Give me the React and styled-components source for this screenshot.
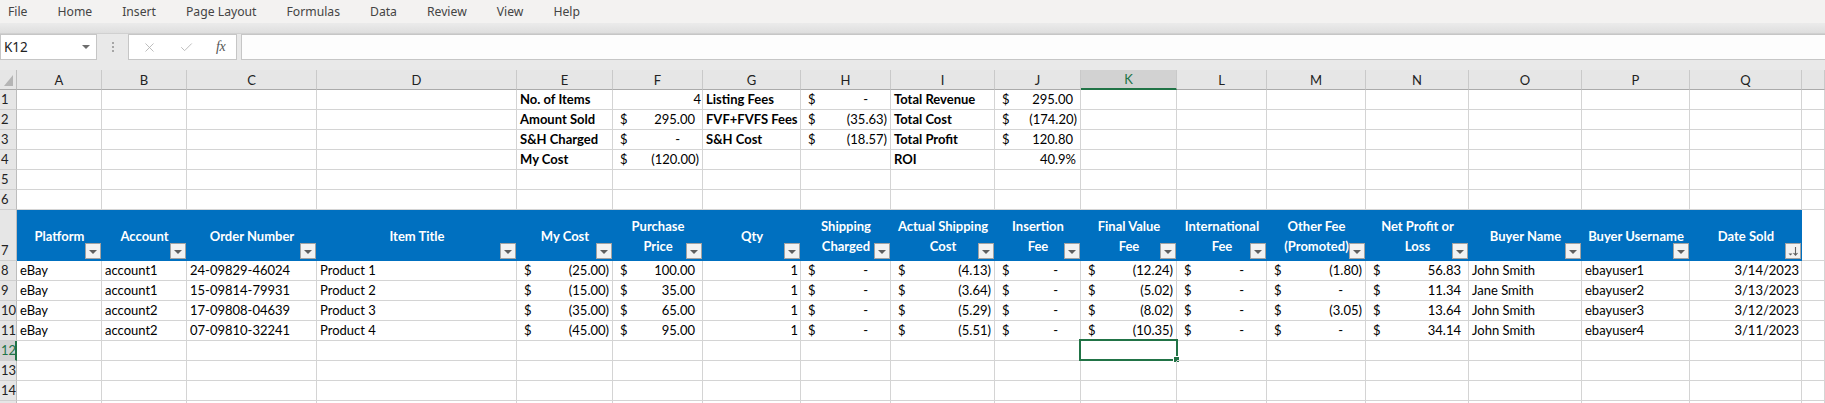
import React from 'react';
import styled, { createGlobalStyle } from 'styled-components';
import { X, Check } from 'lucide-react';

const GlobalStyle = createGlobalStyle`
  html, body {
    margin: 0;
    padding: 0;
    background: #fff;
    overflow: hidden;
  }
  body {
    font-family: Lato, 'Liberation Sans', sans-serif;
  }
`;

const GREEN = '#217346';
const GRID = '#d4d4d4';
const COLS = [17, 85, 85, 130, 200, 96, 90, 98, 90, 104, 86, 96, 90, 99, 103, 113, 108, 112];
const LETTERS = ['A', 'B', 'C', 'D', 'E', 'F', 'G', 'H', 'I', 'J', 'K', 'L', 'M', 'N', 'O', 'P', 'Q', ''];
const MENU = ['File', 'Home', 'Insert', 'Page Layout', 'Formulas', 'Data', 'Review', 'View', 'Help'];

const Window = styled.div`
  width: 1825px;
  height: 403px;
  overflow: hidden;
  background: #fff;
`;

const MenuBar = styled.nav`
  height: 23px;
  display: flex;
  align-items: center;
  gap: 30px;
  padding-left: 8px;
  background: #f3f2f1;
  font-family: 'Noto Sans', sans-serif;
  font-size: 12.2px;
  color: #444;
`;

const RibbonEdge = styled.div`
  height: 10px;
  background: linear-gradient(#ebebeb, #dedede);
  border-bottom: 1px solid #d0d0d0;
`;

const FormulaBar = styled.div`
  height: 36px;
  box-sizing: border-box;
  display: flex;
  align-items: flex-start;
  background: #e9e9e9;
`;

const NameBox = styled.div`
  width: 97px;
  height: 26px;
  box-sizing: border-box;
  display: flex;
  align-items: center;
  justify-content: space-between;
  padding: 0 6px 0 3px;
  background: #fff;
  border: 1px solid #c6c6c6;
  font-family: 'Noto Sans', sans-serif;
  font-size: 13.5px;
  color: #222;
`;

const Caret = styled.span`
  width: 0;
  height: 0;
  border-left: 4px solid transparent;
  border-right: 4px solid transparent;
  border-top: 4px solid #6d6d6d;
`;

const Dots = styled.div`
  width: 31px;
  height: 26px;
  display: flex;
  flex-direction: column;
  align-items: center;
  justify-content: center;
  gap: 2px;

  span {
    width: 2px;
    height: 2px;
    background: #a6a6a6;
  }
`;

const FxBox = styled.div`
  width: 109px;
  height: 26px;
  box-sizing: border-box;
  display: flex;
  align-items: center;
  gap: 22px;
  padding-left: 13px;
  margin-right: 4px;
  background: #fff;
  border: 1px solid #c6c6c6;
  color: #b4b4b4;
`;

const Fx = styled.span`
  font-family: 'Liberation Serif', serif;
  font-style: italic;
  font-size: 14px;
  color: #555;
  letter-spacing: -0.5px;
`;

const FormulaInput = styled.div`
  flex: 1;
  height: 26px;
  box-sizing: border-box;
  background: #fdfdfd;
  border: 1px solid #c6c6c6;
  border-right: none;
`;

const Row = styled.div`
  display: grid;
  grid-template-columns: ${COLS.map((w) => w + 'px').join(' ')} 1fr;
  height: ${(p) => p.$h || 20}px;
`;

const ColHead = styled.div`
  box-sizing: border-box;
  display: flex;
  align-items: center;
  justify-content: center;
  background: ${(p) => (p.$active ? '#d2d2d2' : '#e6e6e6')};
  border-right: 1px solid #c9c9c9;
  border-bottom: ${(p) => (p.$active ? `2px solid ${GREEN}` : '1px solid #ababab')};
  font-size: 13px;
  color: ${(p) => (p.$active ? GREEN : '#222')};
`;

const Corner = styled.div`
  position: relative;
  box-sizing: border-box;
  background: #e6e6e6;
  border-right: 1px solid #bdbdbd;
  border-bottom: 1px solid #ababab;

  &::after {
    content: '';
    position: absolute;
    right: 3px;
    bottom: 3px;
    border-left: 9px solid transparent;
    border-bottom: 11px solid #b5b5b5;
  }
`;

const RowHead = styled.div`
  box-sizing: border-box;
  display: flex;
  align-items: flex-end;
  padding: 0 0 1px 1px;
  overflow: hidden;
  background: ${(p) => (p.$active ? '#d2d2d2' : '#e6e6e6')};
  border-right: ${(p) => (p.$active ? `2px solid ${GREEN}` : '1px solid #bdbdbd')};
  border-bottom: 1px solid #cfcfcf;
  font-size: 13px;
  line-height: 17px;
  color: ${(p) => (p.$active ? GREEN : '#222')};
`;

const Cell = styled.div`
  position: relative;
  box-sizing: border-box;
  display: flex;
  align-items: flex-end;
  justify-content: ${(p) => (p.$right ? 'flex-end' : 'flex-start')};
  padding: 0 ${(p) => p.$pr ?? 2}px 1px 3px;
  border-right: 1px solid ${GRID};
  border-bottom: 1px solid ${GRID};
  white-space: nowrap;
  font-size: 13px;
  line-height: 17px;
  font-weight: ${(p) => (p.$bold ? 700 : 400)};
  color: #000;
`;

const AcctCell = styled(Cell)`
  justify-content: space-between;
  padding-right: 3px;
`;

const Dollar = styled.span`
  padding-left: 4px;
`;

const Amount = styled.span`
  padding-right: ${(p) => p.$pad}px;
`;

const HeadCell = styled.div`
  position: relative;
  box-sizing: border-box;
  display: flex;
  align-items: center;
  justify-content: center;
  background: #0070c0;
  text-align: center;
  white-space: nowrap;
  font-size: 13px;
  line-height: 20px;
  font-weight: 700;
  color: #fff;
`;

const FilterButton = styled.span`
  position: absolute;
  right: 1px;
  bottom: 2px;
  width: 16px;
  height: 16px;
  box-sizing: border-box;
  display: flex;
  align-items: center;
  justify-content: center;
  background: #f2f2f2;
  border: 1px solid #a3a3a3;

  &::before {
    content: '';
    margin-top: 2px;
    border-left: 4px solid transparent;
    border-right: 4px solid transparent;
    border-top: 4px solid #5f5f5f;
  }
`;

const SortButton = styled(FilterButton)`
  &::before {
    display: none;
  }
`;

const Selection = styled.span`
  position: absolute;
  top: -2px;
  left: -2px;
  right: -2px;
  bottom: -1px;
  border: 2px solid ${GREEN};
  pointer-events: none;

  &::after {
    content: '';
    position: absolute;
    right: -4px;
    bottom: -4px;
    width: 5px;
    height: 5px;
    background: ${GREEN};
    border: 1px solid #fff;
  }
`;

const txt = (v) => ({ kind: 'text', v });
const bold = (v) => ({ kind: 'text', v, bold: true });
const num = (v, pr = 2) => ({ kind: 'num', v, pr });
const acct = (v) => ({ kind: 'acct', v });

const HEADERS = [
  ['Platform'],
  ['Account'],
  ['Order Number'],
  ['Item Title'],
  ['My Cost'],
  ['Purchase', 'Price'],
  ['Qty'],
  ['Shipping', 'Charged'],
  ['Actual Shipping', 'Cost'],
  ['Insertion', 'Fee'],
  ['Final Value', 'Fee'],
  ['International', 'Fee'],
  ['Other Fee', '(Promoted)'],
  ['Net Profit or', 'Loss'],
  ['Buyer Name'],
  ['Buyer Username'],
  ['Date Sold'],
];

const empty = (n) => Array.from({ length: n }, () => null);

const SUMMARY = [
  [bold('No. of Items'), num('4', 1), bold('Listing Fees'), acct('-'), bold('Total Revenue'), acct('295.00')],
  [bold('Amount Sold'), acct('295.00'), bold('FVF+FVFS Fees'), acct('(35.63)'), bold('Total Cost'), acct('(174.20)')],
  [bold('S&H Charged'), acct('-'), bold('S&H Cost'), acct('(18.57)'), bold('Total Profit'), acct('120.80')],
  [bold('My Cost'), acct('(120.00)'), null, null, bold('ROI'), num('40.9%', 4)],
];

const ORDERS = [
  ['account1', '24-09829-46024', 'Product 1', '(25.00)', '100.00', '(4.13)', '(12.24)', '(1.80)', '56.83', 'John Smith', 'ebayuser1', '3/14/2023'],
  ['account1', '15-09814-79931', 'Product 2', '(15.00)', '35.00', '(3.64)', '(5.02)', '-', '11.34', 'Jane Smith', 'ebayuser2', '3/13/2023'],
  ['account2', '17-09808-04639', 'Product 3', '(35.00)', '65.00', '(5.29)', '(8.02)', '(3.05)', '13.64', 'John Smith', 'ebayuser3', '3/12/2023'],
  ['account2', '07-09810-32241', 'Product 4', '(45.00)', '95.00', '(5.51)', '(10.35)', '-', '34.14', 'John Smith', 'ebayuser4', '3/11/2023'],
];

const orderRow = ([account, order, title, cost, price, ship, fvf, other, net, buyer, user, date]) => [
  txt('eBay'),
  txt(account),
  txt(order),
  txt(title),
  acct(cost),
  acct(price),
  num('1'),
  acct('-'),
  acct(ship),
  acct('-'),
  acct(fvf),
  acct('-'),
  acct(other),
  acct(net),
  txt(buyer),
  txt(user),
  num(date),
  null,
];

// rows 1-14, plus the top sliver of row 15 (its number sits below the fold)
const ROWS = [
  ...SUMMARY.map((r) => [...empty(4), ...r, ...empty(8)]),
  empty(18),
  empty(18),
  'header',
  ...ORDERS.map(orderRow),
  empty(18),
  empty(18),
  empty(18),
  empty(18),
];

const amountPad = (v) => {
  if (v === '-') return 19;
  if (v.startsWith('(')) return 0;
  return 4;
};

const SheetCell = ({ cell, selected }) => {
  const sel = selected && <Selection />;
  if (!cell) return <Cell>{sel}</Cell>;
  if (cell.kind === 'acct') {
    return (
      <AcctCell>
        <Dollar>$</Dollar>
        <Amount $pad={amountPad(cell.v)}>{cell.v}</Amount>
        {sel}
      </AcctCell>
    );
  }
  if (cell.kind === 'num') {
    return (
      <Cell $right $pr={cell.pr}>
        {cell.v}
        {sel}
      </Cell>
    );
  }
  return (
    <Cell $bold={cell.bold}>
      {cell.v}
      {sel}
    </Cell>
  );
};

const SortIcon = () => (
  <svg width="12" height="12" viewBox="0 0 12 12">
    <path d="M1.5 8.5h4l-2 2z" fill="#5f5f5f" />
    <path d="M8.5 2v8M6.5 8l2 2.2L10.5 8" stroke="#5f5f5f" strokeWidth="1.1" fill="none" />
  </svg>
);

const TableHeaderRow = () => (
  <Row $h={51}>
    <RowHead>7</RowHead>
    {HEADERS.map((lines, i) => (
      <HeadCell key={i}>
        <div>
          {lines.map((l, j) => (
            <div key={j}>{l}</div>
          ))}
        </div>
        {i === HEADERS.length - 1 ? (
          <SortButton>
            <SortIcon />
          </SortButton>
        ) : (
          <FilterButton />
        )}
      </HeadCell>
    ))}
    <Cell />
  </Row>
);

const App = () => (
  <Window>
    <GlobalStyle />
    <MenuBar>
      {MENU.map((m) => (
        <span key={m}>{m}</span>
      ))}
    </MenuBar>
    <RibbonEdge />
    <FormulaBar>
      <NameBox>
        <span>K12</span>
        <Caret />
      </NameBox>
      <Dots>
        <span />
        <span />
        <span />
      </Dots>
      <FxBox>
        <X size={15} strokeWidth={1.4} />
        <Check size={15} strokeWidth={1.4} />
        <Fx>fx</Fx>
      </FxBox>
      <FormulaInput />
    </FormulaBar>
    <Row>
      <Corner />
      {LETTERS.map((l, i) => (
        <ColHead key={i} $active={l === 'K'}>
          {l}
        </ColHead>
      ))}
    </Row>
    {ROWS.map((row, r) =>
      row === 'header' ? (
        <TableHeaderRow key={r} />
      ) : (
        <Row key={r}>
          <RowHead $active={r + 1 === 12}>{r + 1 < 15 ? r + 1 : ''}</RowHead>
          {row.map((cell, c) => (
            <SheetCell key={c} cell={cell} selected={r + 1 === 12 && c === 10} />
          ))}
        </Row>
      )
    )}
  </Window>
);

export default App;
